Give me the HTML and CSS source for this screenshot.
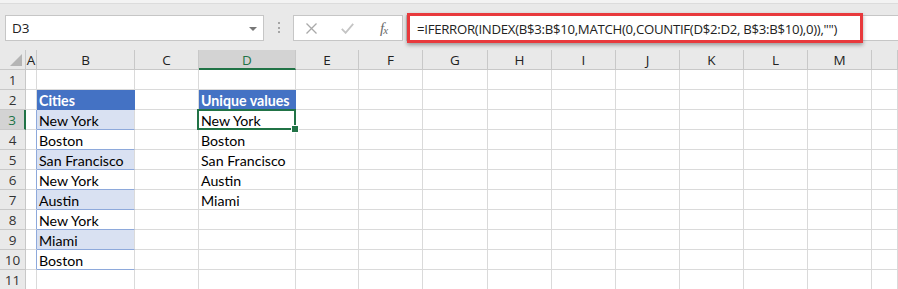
FILE: index.html
```html
<!DOCTYPE html>
<html>
<head>
<meta charset="utf-8">
<link rel="stylesheet" href="styles.css">
</head>
<body>
<div class="app">
  <div class="ribbon-edge"></div>
  <div class="formula-row">
    <div class="namebox">
      <span>D3</span>
      <svg class="caret" width="8" height="4" viewBox="0 0 8 4"><path d="M0 0H8L4 4Z" fill="#777"/></svg>
    </div>
    <div class="grip"><i></i><i></i><i></i></div>
    <div class="fx-buttons">
      <svg width="11" height="11" viewBox="0 0 11 11"><path d="M0.5 0.5L10.5 10.5M10.5 0.5L0.5 10.5" stroke="#a9a9a9" stroke-width="1.3" fill="none"/></svg>
      <svg width="13" height="11" viewBox="0 0 13 11"><path d="M0.8 5.8L4.6 9.8L12.2 0.8" stroke="#c4c4c4" stroke-width="1.8" fill="none"/></svg>
      <span class="fx">f<sub>x</sub></span>
    </div>
    <div class="formula-bar">
      <span class="formula-text">=IFERROR(INDEX(B$3:B$10,MATCH(0,COUNTIF(D$2:D2, B$3:B$10),0)),"")</span>
      <div class="highlight"></div>
    </div>
  </div>
  <div class="sheet">
    <div class="corner"><svg width="14" height="14" viewBox="0 0 14 14"><path d="M13 1V13H1Z" fill="#b5b5b5"/></svg></div>
    <div class="ch">A</div><div class="ch">B</div><div class="ch">C</div><div class="ch ch-active">D</div><div class="ch">E</div><div class="ch">F</div><div class="ch">G</div><div class="ch">H</div><div class="ch">I</div><div class="ch">J</div><div class="ch">K</div><div class="ch">L</div><div class="ch">M</div><div class="ch"></div>

    <div class="rh">1</div>
    <div class="c"></div><div class="c"></div><div class="c"></div><div class="c"></div><div class="c"></div><div class="c"></div><div class="c"></div><div class="c"></div><div class="c"></div><div class="c"></div><div class="c"></div><div class="c"></div><div class="c"></div><div class="c"></div>

    <div class="rh">2</div>
    <div class="c"></div><div class="c th">Cities</div><div class="c"></div><div class="c th">Unique values</div><div class="c"></div><div class="c"></div><div class="c"></div><div class="c"></div><div class="c"></div><div class="c"></div><div class="c"></div><div class="c"></div><div class="c"></div><div class="c"></div>

    <div class="rh rh-active">3</div>
    <div class="c tl"></div><div class="c tb band">New York</div><div class="c"></div><div class="c active">New York<div class="sel"><span class="handle"></span></div></div><div class="c"></div><div class="c"></div><div class="c"></div><div class="c"></div><div class="c"></div><div class="c"></div><div class="c"></div><div class="c"></div><div class="c"></div><div class="c"></div>

    <div class="rh">4</div>
    <div class="c tl"></div><div class="c tb">Boston</div><div class="c"></div><div class="c">Boston</div><div class="c"></div><div class="c"></div><div class="c"></div><div class="c"></div><div class="c"></div><div class="c"></div><div class="c"></div><div class="c"></div><div class="c"></div><div class="c"></div>

    <div class="rh">5</div>
    <div class="c tl"></div><div class="c tb band">San Francisco</div><div class="c"></div><div class="c">San Francisco</div><div class="c"></div><div class="c"></div><div class="c"></div><div class="c"></div><div class="c"></div><div class="c"></div><div class="c"></div><div class="c"></div><div class="c"></div><div class="c"></div>

    <div class="rh">6</div>
    <div class="c tl"></div><div class="c tb">New York</div><div class="c"></div><div class="c">Austin</div><div class="c"></div><div class="c"></div><div class="c"></div><div class="c"></div><div class="c"></div><div class="c"></div><div class="c"></div><div class="c"></div><div class="c"></div><div class="c"></div>

    <div class="rh">7</div>
    <div class="c tl"></div><div class="c tb band">Austin</div><div class="c"></div><div class="c">Miami</div><div class="c"></div><div class="c"></div><div class="c"></div><div class="c"></div><div class="c"></div><div class="c"></div><div class="c"></div><div class="c"></div><div class="c"></div><div class="c"></div>

    <div class="rh">8</div>
    <div class="c tl"></div><div class="c tb">New York</div><div class="c"></div><div class="c"></div><div class="c"></div><div class="c"></div><div class="c"></div><div class="c"></div><div class="c"></div><div class="c"></div><div class="c"></div><div class="c"></div><div class="c"></div><div class="c"></div>

    <div class="rh">9</div>
    <div class="c tl"></div><div class="c tb band">Miami</div><div class="c"></div><div class="c"></div><div class="c"></div><div class="c"></div><div class="c"></div><div class="c"></div><div class="c"></div><div class="c"></div><div class="c"></div><div class="c"></div><div class="c"></div><div class="c"></div>

    <div class="rh">10</div>
    <div class="c tl"></div><div class="c tb">Boston</div><div class="c"></div><div class="c"></div><div class="c"></div><div class="c"></div><div class="c"></div><div class="c"></div><div class="c"></div><div class="c"></div><div class="c"></div><div class="c"></div><div class="c"></div><div class="c"></div>

    <div class="rh">11</div>
    <div class="c"></div><div class="c"></div><div class="c"></div><div class="c"></div><div class="c"></div><div class="c"></div><div class="c"></div><div class="c"></div><div class="c"></div><div class="c"></div><div class="c"></div><div class="c"></div><div class="c"></div><div class="c"></div>
  </div>
</div>
</body>
</html>
```
FILE: styles.css
```css
* { box-sizing: border-box; }
html, body { margin: 0; padding: 0; background: #fff; }
body { font-family: "Lato", "Open Sans", sans-serif; overflow: hidden; }
.app { width: 898px; height: 289px; overflow: hidden; }

.ribbon-edge { height: 4px; background: #f3f3f3; border-bottom: 1px solid #dcdcdc; }

.formula-row {
  height: 46px;
  background: #e9e9e9;
  display: flex;
  align-items: flex-start;
  padding: 11px 0 0 5px;
}
.namebox {
  width: 259px; height: 26px;
  background: #fff; border: 1px solid #c6c6c6;
  display: flex; align-items: center; justify-content: space-between;
  padding: 0 6px 0 6px;
  font-family: "Open Sans", sans-serif; font-size: 13.5px; color: #222;
}
.caret { margin-top: 1px; }
.grip { width: 2px; margin: 7px 13px 0 14px; display: flex; flex-direction: column; gap: 2.5px; }
.grip i { display: block; width: 2px; height: 2px; background: #a5a5a5; }

.fx-buttons {
  width: 110px; height: 26px;
  background: #fff; border: 1px solid #c6c6c6;
  display: flex; align-items: center; gap: 24px;
  padding-left: 12px;
}
.fx { font-family: "Liberation Serif", serif; font-style: italic; font-size: 15px; color: #6a6a6a; margin-left: 2px; letter-spacing: -1px; }
.fx sub { font-size: 11px; vertical-align: -1px; }

.formula-bar {
  flex: 1; height: 26px; margin-left: 3px;
  background: #fff; border: 1px solid #c6c6c6; border-right: none;
  position: relative;
  display: flex; align-items: center;
  padding-left: 10px;
}
.formula-text { font-family: "Open Sans", sans-serif; font-size: 13.2px; letter-spacing: -0.28px; color: #222; white-space: nowrap; margin-top: 1px; }
.highlight {
  position: absolute; left: 0; top: -3px;
  width: 456px; height: 30px;
  border: 3px solid #e8393c;
  box-shadow: 0 2px 4px rgba(0,0,0,0.35);
}

.sheet {
  display: grid;
  grid-template-columns: 26px 11px 98px 64px 97px 63px 64px 65px 64px 64px 64px 64px 64px 64px 1fr;
  grid-auto-rows: 20px;
}
.corner, .ch, .rh {
  background: #e9e9e9;
  border-right: 1px solid #c8c8c8;
  border-bottom: 1px solid #c8c8c8;
  color: #333;
  font-family: "Open Sans", sans-serif;
  font-size: 13.5px;
}
.corner { display: flex; align-items: flex-end; justify-content: flex-end; padding: 0 2px 2px 0; }
.ch { text-align: center; line-height: 21px; color: #222; }
.ch-active { background: #d3d3d3; border-bottom: 2px solid #217346; color: #217346; }
.rh { text-align: center; line-height: 21px; }
.rh-active { background: #d3d3d3; border-right: 2px solid #217346; color: #217346; }

.c {
  border-right: 1px solid #dadada;
  border-bottom: 1px solid #dadada;
  font-size: 14.2px; color: #000;
  padding-left: 2px;
  line-height: 21px;
  white-space: nowrap;
  position: relative;
}
.th { background: #4472c4; color: #fff; font-weight: bold; border-color: #4472c4; }
.tl { border-right-color: #8ea9db; }
.tb { border-bottom-color: #8ea9db; }
.band { background: #d9e1f2; }
.active { z-index: 2; }
.sel {
  position: absolute; left: -2px; top: -1px; right: -1px; bottom: -1px;
  border: 2px solid #217346;
}
.handle {
  position: absolute; right: -4px; bottom: -4px;
  width: 6px; height: 6px; background: #217346;
  outline: 1px solid #fff;
}
```
